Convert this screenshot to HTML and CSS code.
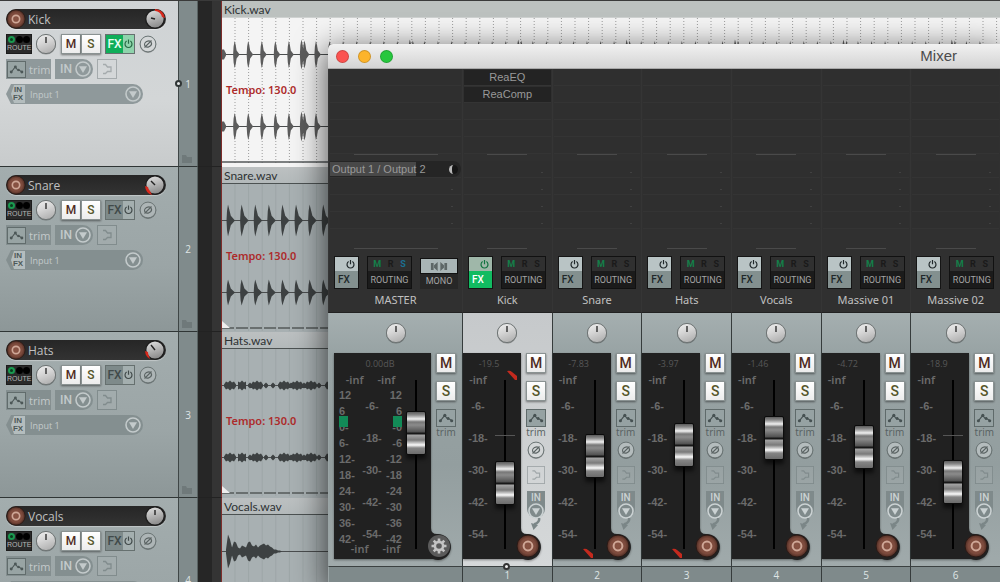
FILE: index.html
```html
<!DOCTYPE html>
<html lang="en">
<head>
<meta charset="utf-8">
<title>Mixer</title>
<link rel="stylesheet" href="styles.css">
</head>
<body>
<svg class="defs" width="0" height="0" aria-hidden="true">
  <defs>
    <linearGradient id="knobFill" x1="0" y1="0" x2="0.4" y2="1"><stop offset="0" stop-color="#f0f0f0"/><stop offset="0.5" stop-color="#d6d6d6"/><stop offset="1" stop-color="#b4b4b4"/></linearGradient>
    <linearGradient id="volFill" x1="0" y1="0" x2="0.3" y2="1"><stop offset="0" stop-color="#e6e6e6"/><stop offset="1" stop-color="#8e8e8e"/></linearGradient>
    <radialGradient id="armFill"><stop offset="0" stop-color="#8a5444"/><stop offset="0.7" stop-color="#7c4a3c"/><stop offset="1" stop-color="#4f2d24"/></radialGradient>
  </defs>
  <symbol id="knob" viewBox="0 0 22 22"><circle cx="11" cy="11.6" r="10" fill="#000" opacity=".3"/><circle cx="11" cy="11" r="9.6" fill="url(#knobFill)" stroke="#6f7575" stroke-width="1"/><path d="M11 4v6" stroke="#222" stroke-width="1.3"/></symbol>
  <symbol id="volknob" viewBox="0 0 22 22"><circle cx="11" cy="11" r="9.3" fill="url(#volFill)" stroke="#1d1d1d" stroke-width="1.4"/></symbol>
  <symbol id="arm" viewBox="0 0 24 24"><circle cx="12" cy="12" r="11" fill="url(#armFill)" stroke="#2a1a16" stroke-width="1"/><circle cx="12" cy="12" r="4.4" fill="none" stroke="#cfa797" stroke-width="2"/></symbol>
  <symbol id="gear" viewBox="0 0 24 24"><circle cx="12" cy="12" r="11" fill="#5b5b5b"/><g stroke="#c4c4c4" stroke-width="2.6"><path d="M12 4.500v15M4.500 12h15M6.700 6.700l10.600 10.600M17.300 6.700L6.700 17.300"/></g><circle cx="12" cy="12" r="5.4" fill="#c4c4c4"/><circle cx="12" cy="12" r="2.8" fill="#5b5b5b"/></symbol>
  <symbol id="power" viewBox="0 0 12 12"><path d="M4 2.8a3.800 3.800 0 1 0 4 0M6 1v4.600" fill="none" stroke="currentColor" stroke-width="1.3"/></symbol>
  <symbol id="env" viewBox="0 0 20 16"><path d="M3.500 11.500L8.500 5l3.500 4.500 1.500-.500L16.500 11" fill="none" stroke="currentColor" stroke-width="1.2"/><circle cx="3.8" cy="11" r="1.7" fill="currentColor"/><circle cx="8.7" cy="5" r="1.7" fill="currentColor"/><circle cx="12.4" cy="8.4" r="1.4" fill="currentColor"/><circle cx="16.3" cy="11" r="1.7" fill="currentColor"/></symbol>
  <symbol id="phase" viewBox="0 0 18 18"><circle cx="9" cy="9.7" r="8.2" fill="#000" opacity=".3"/><circle cx="9" cy="9" r="7.9" fill="currentColor" stroke="#6a7474" stroke-width="1"/><ellipse cx="9" cy="9" rx="3.6" ry="2.8" transform="rotate(-30 9 9)" fill="none" stroke="#5a6363" stroke-width="1.2"/><path d="M5.500 12.500l7-7" stroke="#5a6363" stroke-width="1.1"/></symbol>
  <symbol id="shape" viewBox="0 0 20 20"><rect x=".5" y=".5" width="19" height="19" fill="#fff" fill-opacity=".05" stroke="currentColor"/><path d="M6 5.500h2.500l2 2.500h3.500v4.500h-3.500l-2 2H6" fill="none" stroke="currentColor" stroke-width="1.300"/></symbol>
  <symbol id="down" viewBox="0 0 18 18"><circle cx="9" cy="9" r="7" fill="none" stroke="currentColor" stroke-width="1.6"/><path d="M5 6.300h8L9 13z" fill="currentColor"/></symbol>
  <symbol id="squiggle" viewBox="0 0 12 12"><path d="M9 0q1 4-4 6v2" fill="none" stroke="currentColor" stroke-width="2.500"/><path d="M1 5l7 2-4.500 5z" fill="currentColor"/></symbol>
  <symbol id="speakers" viewBox="0 0 20 12"><path d="M1 2h3v8H1zM4.500 4.500L8.500 1v10L4.500 7.500zM19 2h-3v8h3zM15.500 4.500L11.500 1v10l4-3.500z" fill="#5d6666"/></symbol>
  <symbol id="folder" viewBox="0 0 10 8"><path d="M0 0h4l1 2h5v6H0z" fill="#6f797a"/></symbol>
</svg>

<main class="app">
  <section class="arrange" id="tracks" aria-label="Tracks"></section>

  <section class="window" aria-label="Mixer">
    <header class="titlebar">
      <button class="light red" aria-label="Close"></button>
      <button class="light amber" aria-label="Minimize"></button>
      <button class="light green" aria-label="Zoom"></button>
      <h1>Mixer</h1>
    </header>
    <div class="channels" id="channels">
      <article class="channel master">
        <div class="rack">
          <div class="slots fx-slots"></div>
          <hr>
          <div class="slots sends"><button class="output"><span>Output 1 / Output</span> 2<i></i></button></div>
          <hr class="second">
          <div class="rack-buttons">
            <button class="fx"><svg><use href="#power"/></svg><span>FX</span></button>
            <button class="routing"><span class="leds"><b class="on">M</b><b>R</b><b class="blue">S</b></span><span>ROUTING</span></button>
            <button class="mono"><span class="plate"><svg><use href="#speakers"/></svg></span><span>MONO</span></button>
          </div>
          <h2>MASTER</h2>
        </div>
        <div class="strip">
          <svg class="knob" role="img" aria-label="Pan"><use href="#knob"/></svg>
          <div class="bay">
            <svg class="well" viewBox="0 0 120 208"><path d="M0 0H97V175Q97 181 103 181A13 13 0 1 1 99 206H0z"/></svg>
            <div class="meter">
              <output>0.00dB</output>
              <div class="ladder">
                <div class="inf"><span>-inf</span><span>-inf</span></div>
                <ul class="db"><li>12</li><li>6</li><li>0-</li><li>6-</li><li>12-</li><li>18-</li><li>24-</li><li>30-</li><li>36-</li><li>42-</li></ul>
                <ul class="scale"><li>-6-</li><li>-18-</li><li>-30-</li><li>-42-</li><li>-54-</li></ul>
                <ul class="db right"><li>12</li><li>6</li><li>-0</li><li>-6</li><li>-12</li><li>-18</li><li>-24</li><li>-30</li><li>-36</li><li>-42</li></ul>
                <div class="inf floor"><span>-inf</span><span>-inf</span></div>
                <i class="level"></i><i class="level two"></i>
              </div>
              <input class="fader" type="range" min="0" max="136" value="99" aria-label="Master volume">
            </div>
            <div class="controls">
              <button class="ms mute">M</button>
              <button class="ms solo">S</button>
              <button class="env" aria-label="Envelope"><svg><use href="#env"/></svg></button>
              <span class="trim">trim</span>
            </div>
            <button class="arm" aria-label="Settings"><svg><use href="#gear"/></svg></button>
          </div>
        </div>
        <footer></footer>
      </article>
    </div>
  </section>
</main>
<script src="app.js"></script>
</body>
</html>
```
FILE: styles.css
```css
*, *::before, *::after { box-sizing: border-box; }
body { margin: 0; background: #262626; font-family: "Open Sans", "Noto Sans", sans-serif; font-size: 11px; }
button, select, input { font: inherit; margin: 0; padding: 0; border: 0; color: inherit; background: none; }
ul { list-style: none; margin: 0; padding: 0; }
h1, h2 { margin: 0; font-weight: 400; }
svg { display: block; }
.defs { position: absolute; }
.app { position: relative; height: 100vh; overflow: hidden; border-top: 1px solid #3a3a3a; }

/* Track list */
.track { display: grid; grid-template-columns: 179px 19px 24px 1fr; height: 165px; overflow: hidden; }
.track:first-child, .track:nth-child(3) { height: 166px; }
.panel { border-right: 1px solid #3f4646; border-bottom: 1px solid #2f3535; background: linear-gradient(#a3adae, #9ba5a6 60%, #8d9798); padding: 8px 0 0 6px; display: flex; flex-direction: column; gap: 5px; }
.selected .panel { background: linear-gradient(#cfd3d5, #d3d6d7 60%, #c8cbcc); }
.namebar { width: 160px; height: 20px; border-radius: 10px; background: linear-gradient(#262626, #333); display: flex; align-items: center; color: #c0c0c0; font-size: 12px; box-shadow: 0 1px 1px rgba(255,255,255,.35); }
.namebar .arm-small { width: 20px; height: 20px; margin-right: 2px; }
.arm-small svg { width: 20px; height: 20px; }
.namebar .vol { margin-left: auto; width: 22px; height: 22px; overflow: visible; }
.row { display: flex; height: 20px; align-items: center; }
.route { width: 26px; height: 20px; background: #2a2a2a; border: 1px solid #1c1c1c; color: #b5b5b5; font: 400 7px/9px "Liberation Sans", sans-serif; }
.dots { display: flex; justify-content: space-between; margin: 0 1px; }
.dots i { width: 7px; height: 7px; border-radius: 50%; background: #000; }
.dots i:first-child { border: 2px solid #1a9a50; background: #0b3a1e; }
.row .knob { width: 22px; height: 22px; margin: 0 4px 0 3px; }
.ms { width: 20px; height: 20px; border: 1px solid #8a9292; background: linear-gradient(#fff, #ececec); font: 500 12px/18px Roboto, sans-serif; text-align: center; box-shadow: 0 1px 2px rgba(0,0,0,.45); }
.mute { color: #4f2b22; }
.solo { color: #56562a; }
.row .fxpair { display: flex; width: 30px; height: 20px; margin: 0 4px; border: 1px solid #66706f; background: #7e8a8a; color: #414a4a; font: 500 12px/18px Roboto, sans-serif; }
.fxpair span { width: 17px; text-align: center; }
.fxpair svg { width: 11px; height: 18px; background: #a4afaf; }
.selected .fxpair { background: #0fae59; color: #e8fff1; }
.selected .fxpair svg { background: #8fd3ac; color: #276a44; }
.phase { width: 18px; height: 18px; color: #adb5b6; }
.selected .phase { color: #d4d7d8; }
.trimbox, .inbox, .inputbox { background: #848f90; height: 20px; display: flex; align-items: center; color: #c3cacb; }
.selected .trimbox, .selected .inbox, .selected .inputbox { background: #8f999b; }
.trimbox { width: 45px; font-size: 11px; gap: 3px; }
.trimbox svg { width: 19px; height: 17px; background: #98a4a4; border: 1px solid #616c6c; color: #4c5757; margin-left: 1px; }
.inbox { width: 38px; margin: 0 4px; border-radius: 0 10px 10px 0; font: 500 12px Roboto, sans-serif; padding-left: 5px; gap: 2px; }
.inbox svg, .inputbox > svg { width: 18px; height: 18px; }
.shape { width: 20px; height: 20px; color: #818c8d; }
.selected .shape { color: #a5abad; }
.inputbox { width: 137px; border-radius: 0 10px 10px 0; padding: 0 1px 0 5px; clip-path: polygon(0 50%, 5px 0, 100% 0, 100% 100%, 5px 100%); }
.infx { width: 14px; height: 18px; background: #b4bdbe; color: #4d5858; font: 700 8px/8px "Liberation Sans", sans-serif; clip-path: polygon(0 50%, 3px 0, 100% 0, 100% 100%, 3px 100%); }
.inputbox select { appearance: none; flex: 1; margin-left: 5px; font-size: 9px; height: 18px; }
.index { position: relative; background: #808b8c; border-right: 1px solid #5a6464; border-bottom: 1px solid #2f3535; color: #dfe4e4; font-size: 10px; line-height: 12px; display: grid; align-items: center; text-align: center; }
.index svg { position: absolute; right: 5px; bottom: 3px; width: 10px; height: 8px; }
.pin::before { content: ""; position: absolute; width: 7px; height: 7px; border: 2px solid #303636; border-radius: 50%; background: #e6e9e9; left: -4px; top: 79px; }
.gutter { background: linear-gradient(90deg, #262626 14px, #343434 14px); border-right: 1px solid #7d2d2b; border-bottom: 1px solid #222; }
.item { background: #a8b0b2; overflow: hidden; display: flex; flex-direction: column; font-family: Lato, sans-serif; position: relative; }
.item h2 { height: 17px; flex: none; border-bottom: 1px solid #4c5252; background: linear-gradient(#bcc0c1, #b3b9ba); color: #2e3233; font-size: 12px; line-height: 17px; padding-left: 2px; }
.selected .item { background: #f4f4f4; }
.selected .item h2 { background: #bcc1bf; border-bottom-color: #cfd2d1; }
.wavebox { position: relative; flex: 1; overflow: hidden; }
.wave { width: 800px; height: 149px; }
.tempo { position: absolute; left: 4px; top: 64px; color: #ad2b2b; font: 600 11px/16px "Noto Sans", sans-serif; }

/* Mixer window */
.window { position: absolute; left: 328px; right: 0; top: 43px; bottom: 0; display: flex; flex-direction: column; background: #2f2f2f; border-radius: 5px 0 0 0; box-shadow: 0 8px 30px 4px rgba(0,0,0,.6); }
.titlebar { height: 25px; flex: none; display: flex; align-items: center; gap: 9px; padding: 0 43px 0 8px; border-radius: 5px 0 0 0; background: linear-gradient(#f1f1f1, #d4d4d4); border-bottom: 1px solid #a9a9a9; }
.titlebar h1 { margin-left: auto; font: 400 15px/24px "Liberation Sans", sans-serif; color: #4b4b4b; }
.light { width: 13px; height: 13px; border-radius: 50%; border: 1px solid rgba(0,0,0,.18); }
.red { background: #fb5350; }
.amber { background: #fdb42b; }
.green { background: #27c73e; }
.channels { flex: 1; min-height: 0; display: grid; grid-template-columns: 134px repeat(6, minmax(0, 1fr)); }
.channel { display: flex; flex-direction: column; min-width: 0; }
.rack { height: 244px; flex: none; background: #303030; border-left: 1px solid #353535; border-bottom: 1px solid #222; text-align: center; }
.slots { background: repeating-linear-gradient(#2f2f2f 0 16px, #343434 16px 17px); margin: 0 1px; }
.fx-slots { height: 85px; padding-top: 1px; }
.plugin { display: block; width: 100%; height: 15px; margin-bottom: 2px; background: #232323; color: #999; font: 11px/15px "Liberation Sans", sans-serif; }
.sends { height: 68px; position: relative; }
.channel hr { margin: 0 auto 6px; border: 0; height: 1px; width: 40px; background: #4a4a4a; }
.channel .second { margin: 19px auto 7px; }
.master hr { width: 84px; }
.sends::after { content: ""; position: absolute; right: 8px; top: 0; width: 2px; height: 68px; background: repeating-linear-gradient(transparent 0 11px, #414141 11px 12px, transparent 12px 17px); }
.output { position: relative; z-index: 1; display: flex; align-items: center; width: 131px; height: 16px; background: #252525; border-radius: 0 8px 8px 0; color: #999; font: 11px/14px "Liberation Sans", sans-serif; white-space: pre; }
.output span { background: #484848; padding-left: 2px; }
.output i { width: 9px; height: 9px; border-radius: 50%; margin-left: auto; margin-right: 3px; background: #151515; border-left: 3px solid #b8b8b8; }
.rack-buttons { display: flex; gap: 8px; padding-left: 5px; height: 33px; }
.fx { width: 25px; height: 33px; border: 1px solid #151515; background: linear-gradient(#b9c4c5 0 14px, #83908f 14px); color: #20282a; display: flex; flex-direction: column; align-items: flex-end; }
.fx svg { width: 11px; height: 11px; margin: 2px 2px 0 0; flex: none; }
.fx span { align-self: flex-start; margin: 4px 0 0 3px; font: 500 10px/12px Roboto, sans-serif; }
.picked .fx { background: linear-gradient(#9fb7a9 0 14px, #11bb61 14px); color: #117340; }
.picked .fx span { color: #fff; }
.routing { width: 45px; height: 33px; border: 1px solid #111; background: #1b1b1b; color: #a4a4a4; font: 9px/18px Roboto, sans-serif; overflow: hidden; }
.leds { display: flex; justify-content: space-around; background: #303030; color: #1a1a1a; height: 14px; line-height: 15px; font-size: 9px; padding: 0 2px; }
.routing > span:last-child, .mono > span:last-child { display: block; }
.leds .on { color: #13804a; }
.leds .blue { color: #1c6f90; }
.mono { width: 38px; height: 31px; margin-top: 2px; background: #272727; color: #a4a4a4; font: 9px/15px Roboto, sans-serif; }
.plate { display: grid; place-items: center; height: 16px; border: 1px solid #111; background: #a9b5b6; }
.plate svg { width: 18px; height: 11px; }
.rack h2 { color: #c0c0c0; line-height: 22px; font: 11px/22px "Noto Sans", sans-serif; white-space: nowrap; }
.strip { height: 254px; flex: none; background: linear-gradient(#a5afb0, #98a3a4 40px, #939e9f 60%, #a0aaab); border-left: 1px solid #363c3c; border-bottom: 1px solid #3b4141; padding-top: 9px; }
.picked .strip { background: linear-gradient(#c6c9cb, #d5d8d9); }
.strip > .knob { width: 22px; height: 22px; margin: 0 auto 9px; }
.bay { position: relative; display: flex; }
.well { position: absolute; left: 0; top: 0; width: 82px; height: 208px; fill: #212121; filter: drop-shadow(0 1px 1px rgba(0,0,0,.4)); }
.meter { position: relative; width: 58px; height: 206px; display: grid; grid-template-columns: 32px 20px; grid-template-rows: 17px 1fr; }
.meter output { grid-column: 1 / 3; color: #575757; font-size: 9px; line-height: 21px; text-align: center; }
.scale { width: 30px; color: #6b6b6b; font: 700 11px/32px "Liberation Sans", sans-serif; text-align: center; }
.scale li { height: 32px; }
.scale .top { height: 20px; font: 600 11px/20px "Noto Sans", sans-serif; }
.fader { appearance: none; writing-mode: vertical-lr; direction: rtl; width: 20px; height: 180px; margin-top: 4px; background: linear-gradient(#565656, #565656) 0 61px / 20px 1px no-repeat, linear-gradient(#000, #000) 9px 6px / 2px 169px no-repeat; }
.fader::-webkit-slider-runnable-track { width: 20px; height: 100%; background: none; }
.fader::-webkit-slider-thumb { appearance: none; width: 20px; height: 44px; border: 1px solid #0c0c0c; border-radius: 2px; box-shadow: 0 4px 4px rgba(0,0,0,.6); background: linear-gradient(#5c5c5c 0, #8a8a8a 3px, #f0f0f0 7px, #777 10px, #8b8b8b 13px, #515151 20px, #181818 21px 22px, #a5a5a5 23px, #7a7a7a 28px, #fafafa 33px, #858585 36px, #6c6c6c 42px); }
.controls { width: 20px; margin-left: 5px; display: flex; flex-direction: column; align-items: center; }
.controls .solo { margin: 8px 0; }
.controls .ms { flex: none; font-size: 14px; }
.env { width: 20px; height: 18px; border: 1px solid #5f6a6a; background: #96a2a3; color: #465152; }
.env svg { width: 18px; height: 16px; }
.trim { color: #575f60; font-size: 10px; line-height: 10px; margin-bottom: 4px; }
.controls .phase { color: #b4bcbd; }
.picked .controls .phase { color: #d4d7d8; }
.controls .shape { width: 18px; height: 18px; margin: 7px 0; }
.picked .shape { color: #a0a7a9; }
.in { width: 18px; height: 27px; border-radius: 0 0 9px 9px; background: #7f8a8b; color: #cbd2d3; font: 500 10px/13px Roboto, sans-serif; }
.in svg { width: 18px; height: 18px; margin-top: -2px; }
.squiggle { width: 12px; height: 12px; color: #7b8687; }
.arm { position: absolute; left: 53px; top: 181px; width: 24px; height: 24px; }
.arm svg { width: 24px; height: 24px; }
.clip { position: absolute; width: 10px; height: 10px; fill: #c42a1e; }
.clip.high { left: 44px; top: 17px; }
.clip.low { left: 30px; top: 195px; }
.channel footer { position: relative; flex: 1; background: #7f8a8b; border-left: 1px solid #363c3c; color: #dfe5e5; text-align: center; line-height: 17px; font-size: 10px; }
.picked footer::before { content: ""; position: absolute; left: 40px; top: -4px; width: 7px; height: 7px; border: 2px solid #333; border-radius: 50%; background: #eee; }
.master .strip, .master footer { border-left-color: #9aa4a5; }
.master .bay { margin-left: 5px; }
.master .well { width: 120px; }
.master .meter { width: 97px; grid-template-columns: 72px 20px; }
.ladder { position: relative; display: grid; grid-template-columns: 20px 26px 17px; grid-template-rows: 20px 1fr; padding-left: 5px; }
.inf { grid-column: 1 / 4; display: flex; justify-content: center; gap: 14px; color: #6b6b6b; font: 600 11px/20px "Noto Sans", sans-serif; }
.floor { position: absolute; left: 5px; top: 169px; width: 63px; }
.db { color: #6b6b6b; font: 700 11px/16px "Liberation Sans", sans-serif; margin-top: -3px; }
.master .scale { width: 26px; }
.db.right { text-align: right; white-space: nowrap; }
.level { position: absolute; left: 5px; top: 46px; width: 9px; height: 11px; background: #128a57; }
.level.two { left: 59px; }
.master .arm { left: 93px; }
```
FILE: app.js
```javascript
const use = (id, cls) => `<svg class="${cls}" aria-hidden="true"><use href="#${id}"/></svg>`;

const spike = (x, y, a, w) =>
  `M${x - 1.5} ${y}L${x - 1} ${y - a * 0.6}L${x} ${y - a}L${x + 1} ${y - a * 0.75}L${x + w * 0.4} ${y - a * 0.3}L${x + w} ${y}L${x + w * 0.4} ${y + a * 0.3}L${x + 1} ${y + a * 0.75}L${x} ${y + a}L${x - 1} ${y + a * 0.6}z`;

const blob = (x, y, heights) =>
  `M${x} ${y}` + heights.map((h, i) => `L${x + i * 2} ${y - h}`).join('') +
  heights.map((h, i) => [i, h]).reverse().map(([i, h]) => `L${x + i * 2} ${y + h}`).join('') + 'z';

const waves = {
  Kick(y) {
    let d = blob(0, y, [5, 5, 1]);
    for (let i = 0; i < 56; i++) {
      const big = i % 8 === 5;
      d += spike(12.6 + i * 13.55 - (big ? 1 : 0), y, big ? 15 : 13.5, 5);
      if (big) d += spike(14.6 + i * 13.55, y, 14, 5);
    }
    return d;
  },
  Snare(y) {
    let d = '';
    for (let i = 0; i < 9; i++) d += spike(6 + i * 13.6, y, y < 80 ? 16 : 13, 7);
    return d;
  },
  Hats(y) {
    const burst = [1, 4, 3, 5, 3, 4, 1];
    const tick = [1, 3, 1];
    return [2, 16, 29, 56, 69, 83, 103].map(x => blob(x, y, x === 16 ? burst.slice(1, 6) : burst)).join('') +
      [26, 42, 49, 67, 80, 95].map(x => blob(x, y, tick)).join('');
  },
  Vocals(y) {
    return y > 80 ? '' : blob(4, y, [2, 17, 12, 4, 10, 9, 4, 3, 6, 5, 4, 9, 10, 6, 5, 7, 4, 6, 7, 8, 6, 7, 5, 4, 2, 2, 1, 1, 0]);
  }
};

const tracks = [
  { name: 'Kick', selected: true, hand: 'M7 10l4 1', arc: 'M11 1a10 10 0 0 1 10 9l-3-1a7 7 0 0 0-7-6z' },
  { name: 'Snare', hand: 'M7 7l4 4', arc: 'M1 12a10 10 0 0 0 7 9l-2-4a7 7 0 0 1-2-4z' },
  { name: 'Hats', hand: 'M7 6l4 5', arc: 'M1 12a10 10 0 0 0 5 8l-1-3a7 7 0 0 1-1-4z' },
  { name: 'Vocals', hand: 'M11 5v5', arc: '' }
];

const grid = (kick) => {
  let d = '';
  for (let i = 0; i < 58; i++) d += `M${13 + i * 13.6} 0V147`;
  return `<path d="${d}" stroke="${kick ? '#9c9c9c' : '#9da6a7'}" stroke-width="1" ${kick ? 'stroke-dasharray="1 2"' : ''}/>`;
};

document.getElementById('tracks').innerHTML = tracks.map((t, i) => `
<article class="track ${t.selected ? 'selected' : ''}">
  <div class="panel">
    <div class="namebar"><button class="arm-small" aria-label="Record arm">${use('arm', '')}</button><span>${t.name}</span>
      <svg class="vol" viewBox="0 0 22 22"><use href="#volknob"/><path d="${t.arc}" fill="#d8281c"/><path d="${t.hand}" stroke="#222" stroke-width="1.4"/></svg></div>
    <div class="row">
      <button class="route"><span class="dots"><i></i><i></i><i></i></span>ROUTE</button>${use('knob', 'knob')}
      <button class="ms mute">M</button><button class="ms solo">S</button>
      <button class="fxpair"><span>FX</span>${use('power', '')}</button>${use('phase', 'phase')}
    </div>
    <div class="row"><button class="trimbox">${use('env', '')}trim</button><button class="inbox">IN${use('down', '')}</button>${use('shape', 'shape')}</div>
    <div class="inputbox"><button class="infx">IN FX</button><select aria-label="${t.name} input"><option>Input 1</option></select>${use('down', '')}</div>
  </div>
  <div class="index ${t.selected ? 'pin' : ''}">${i + 1}${use('folder', '')}</div>
  <div class="gutter"></div>
  <div class="item"><h2>${t.name}.wav</h2>
    <div class="wavebox">
      <svg class="wave" viewBox="0 0 800 149">${grid(t.selected)}
        <path d="M0 36.500H800M0 108.500H800" stroke="#4a4d4e"/>
        <path d="${waves[t.name](36.5)}${waves[t.name](108.5)}" fill="${t.selected ? '#5c5c5c' : '#3d4142'}"/>
        <path d="M0 144H800" stroke="#54595a" stroke-width="1.500" ${t.selected ? '' : 'stroke-dasharray="12 2"'}/>
        ${t.selected ? '' : '<path d="M0 137l8 7H0z" fill="#eee"/>'}
      </svg>
      ${t.name === 'Vocals' ? '' : '<span class="tempo">Tempo: 130.0</span>'}
    </div></div>
</article>`).join('');

const channels = [
  { name: 'Kick', db: '-19.5', fader: 49, picked: true, clip: 'high', plugins: ['ReaEQ', 'ReaComp'] },
  { name: 'Snare', db: '-7.83', fader: 76, clip: 'low' },
  { name: 'Hats', db: '-3.97', fader: 87, clip: 'low' },
  { name: 'Vocals', db: '-1.46', fader: 94 },
  { name: 'Massive 01', db: '-4.72', fader: 85 },
  { name: 'Massive 02', db: '-18.9', fader: 50 }
];

document.getElementById('channels').insertAdjacentHTML('beforeend', channels.map((c, i) => `
<article class="channel ${c.picked ? 'picked' : ''}">
  <div class="rack">
    <div class="slots fx-slots">${(c.plugins || []).map(p => `<button class="plugin">${p}</button>`).join('')}</div>
    <hr><div class="slots sends"></div><hr class="second">
    <div class="rack-buttons">
      <button class="fx">${use('power', '')}<span>FX</span></button>
      <button class="routing"><span class="leds"><b class="on">M</b><b>R</b><b>S</b></span><span>ROUTING</span></button>
    </div>
    <h2>${c.name}</h2>
  </div>
  <div class="strip">${use('knob', 'knob')}
    <div class="bay">
      <svg class="well" viewBox="0 0 82 208"><path d="M0 0H58V175Q58 181 64 181A13 13 0 1 1 60 206H0z"/></svg>
      <div class="meter"><output>${c.db}</output>
        <ul class="scale"><li class="top">-inf</li><li>-6-</li><li>-18-</li><li>-30-</li><li>-42-</li><li>-54-</li></ul>
        <input class="fader" type="range" min="0" max="136" value="${c.fader}" aria-label="${c.name} volume">
        ${c.clip ? `<svg class="clip ${c.clip}" viewBox="0 0 10 10"><path d="M0 1q3-1 5 1l5 4v4H8z"/></svg>` : ''}
      </div>
      <div class="controls">
        <button class="ms mute">M</button><button class="ms solo">S</button>
        <button class="env" aria-label="Envelope">${use('env', '')}</button><span class="trim">trim</span>
        ${use('phase', 'phase')}${use('shape', 'shape')}
        <button class="in">IN${use('down', '')}</button>${use('squiggle', 'squiggle')}
      </div>
      <button class="arm" aria-label="Record arm">${use('arm', '')}</button>
    </div>
  </div>
  <footer>${i + 1}</footer>
</article>`).join(''));
```
